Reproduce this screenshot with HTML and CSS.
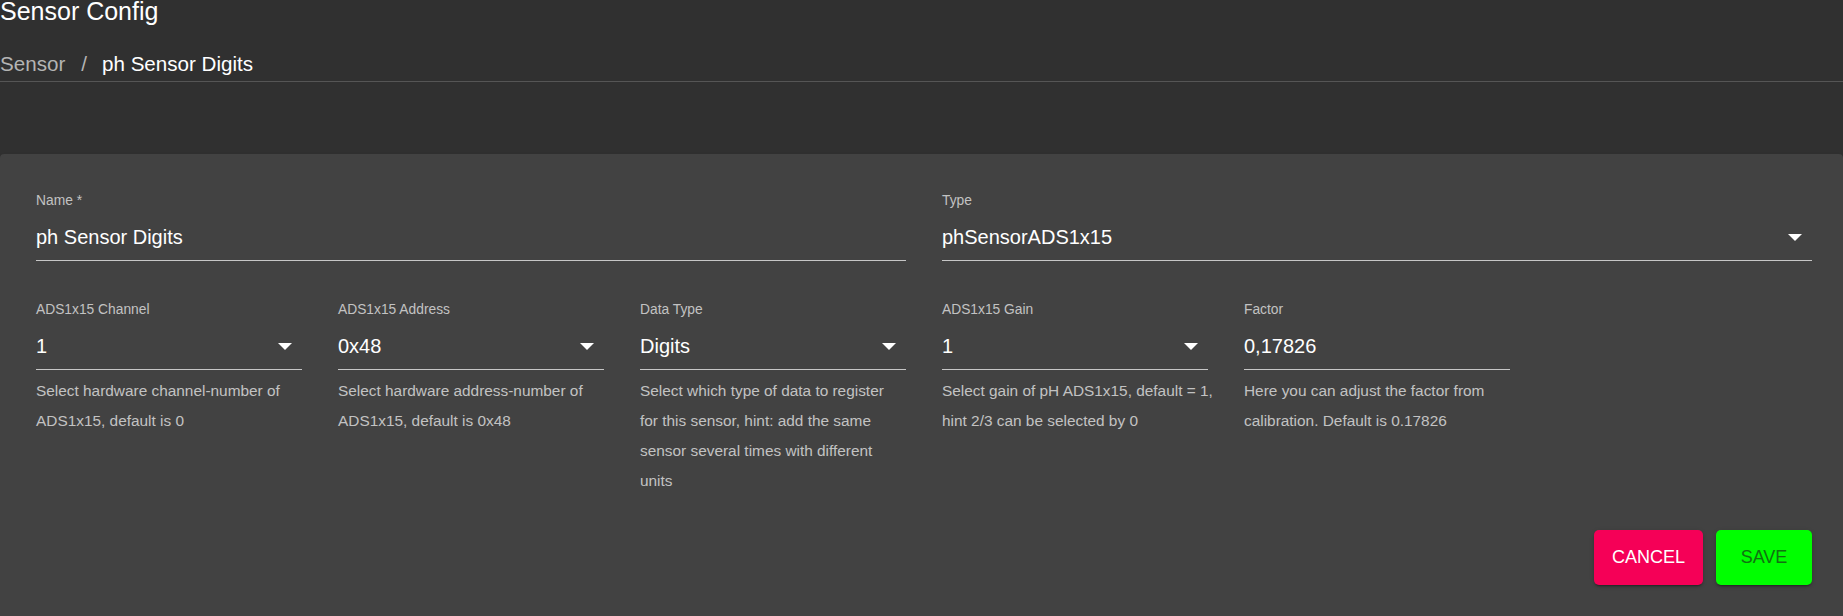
FILE: index.html
```html
<!DOCTYPE html>
<html lang="en">
<head>
<meta charset="utf-8">
<title>Sensor Config</title>
<link rel="stylesheet" href="styles.css">
</head>
<body>
<header class="header">
  <h1 class="title">Sensor Config</h1>
  <nav class="crumbs">
    <span class="crumb-link">Sensor</span>
    <span class="crumb-sep">/</span>
    <span class="crumb-current">ph Sensor Digits</span>
  </nav>
</header>

<main class="paper">
  <div class="grid">
    <div class="field span3">
      <div class="label">Name *</div>
      <div class="input"><span class="value">ph Sensor Digits</span></div>
    </div>
    <div class="field span3">
      <div class="label">Type</div>
      <div class="input"><span class="value">phSensorADS1x15</span><svg class="arrow" viewBox="0 0 14 7" width="14" height="7"><polygon points="0,0 14,0 7,7" fill="#fff"/></svg></div>
    </div>

    <div class="field">
      <div class="label">ADS1x15 Channel</div>
      <div class="input"><span class="value">1</span><svg class="arrow" viewBox="0 0 14 7" width="14" height="7"><polygon points="0,0 14,0 7,7" fill="#fff"/></svg></div>
      <div class="helper">Select hardware channel-number of<br>ADS1x15, default is 0</div>
    </div>
    <div class="field">
      <div class="label">ADS1x15 Address</div>
      <div class="input"><span class="value">0x48</span><svg class="arrow" viewBox="0 0 14 7" width="14" height="7"><polygon points="0,0 14,0 7,7" fill="#fff"/></svg></div>
      <div class="helper">Select hardware address-number of<br>ADS1x15, default is 0x48</div>
    </div>
    <div class="field">
      <div class="label">Data Type</div>
      <div class="input"><span class="value">Digits</span><svg class="arrow" viewBox="0 0 14 7" width="14" height="7"><polygon points="0,0 14,0 7,7" fill="#fff"/></svg></div>
      <div class="helper">Select which type of data to register<br>for this sensor, hint: add the same<br>sensor several times with different<br>units</div>
    </div>
    <div class="field">
      <div class="label">ADS1x15 Gain</div>
      <div class="input"><span class="value">1</span><svg class="arrow" viewBox="0 0 14 7" width="14" height="7"><polygon points="0,0 14,0 7,7" fill="#fff"/></svg></div>
      <div class="helper">Select gain of pH ADS1x15, default = 1,<br>hint 2/3 can be selected by 0</div>
    </div>
    <div class="field">
      <div class="label">Factor</div>
      <div class="input"><span class="value">0,17826</span></div>
      <div class="helper">Here you can adjust the factor from<br>calibration. Default is 0.17826</div>
    </div>
  </div>

  <div class="actions">
    <button class="btn btn-cancel" type="button">CANCEL</button>
    <button class="btn btn-save" type="button">SAVE</button>
  </div>
</main>
</body>
</html>
```

FILE: styles.css
```css
* { box-sizing: border-box; }

html, body {
  margin: 0;
  padding: 0;
  background: #303030;
  font-family: "Liberation Sans", Arial, sans-serif;
  color: #fff;
  overflow: hidden;
}

.header {
  border-bottom: 1px solid #555555;
  padding-bottom: 5px;
}

.title {
  margin: 0;
  font-size: 25px;
  line-height: 22px;
  font-weight: 400;
  color: #ffffff;
}

.crumbs {
  margin-top: 30px;
  font-size: 20.6px;
  line-height: 24px;
  display: flex;
}

.crumb-link { color: #b4b4b4; }
.crumb-sep { color: #b4b4b4; margin: 0 15px 0 16px; }
.crumb-current { color: #ffffff; }

.paper {
  margin-top: 72px;
  background: #424242;
  border-radius: 4px 4px 0 0;
  padding: 39px 31px 60px 36px;
  box-shadow: 0 2px 1px -1px rgba(0,0,0,0.2), 0 1px 1px 0 rgba(0,0,0,0.14), 0 1px 3px 0 rgba(0,0,0,0.12);
}

.grid {
  display: grid;
  grid-template-columns: repeat(6, 1fr);
  column-gap: 36px;
  row-gap: 41px;
}

.span3 { grid-column: span 3; }

.field {
  display: flex;
  flex-direction: column;
  min-width: 0;
}

.label {
  font-size: 13.8px;
  line-height: 16px;
  height: 16px;
  color: #c2c2c2;
}

.input {
  display: flex;
  align-items: center;
  justify-content: space-between;
  padding: 16px 0 11px 0;
  font-size: 20px;
  line-height: 24px;
  color: #ffffff;
  border-bottom: 1px solid #c6c6c6;
}

.arrow {
  display: block;
  margin-right: 10px;
  flex: none;
}

.helper {
  margin-top: 6px;
  font-size: 15.4px;
  line-height: 30px;
  color: #c2c2c2;
  white-space: nowrap;
}

.actions {
  display: flex;
  justify-content: flex-end;
  gap: 13px;
  margin-top: 34px;
}

.btn {
  height: 55px;
  border: none;
  border-radius: 5px;
  font-family: "Liberation Sans", Arial, sans-serif;
  font-size: 18px;
  padding: 0;
  box-shadow: 0 3px 1px -2px rgba(0,0,0,0.2), 0 2px 2px 0 rgba(0,0,0,0.14), 0 1px 5px 0 rgba(0,0,0,0.12);
}

.btn-cancel {
  width: 109px;
  background: #f50057;
  color: #ffffff;
}

.btn-save {
  width: 96px;
  background: #00ff00;
  color: #127012;
}
```
